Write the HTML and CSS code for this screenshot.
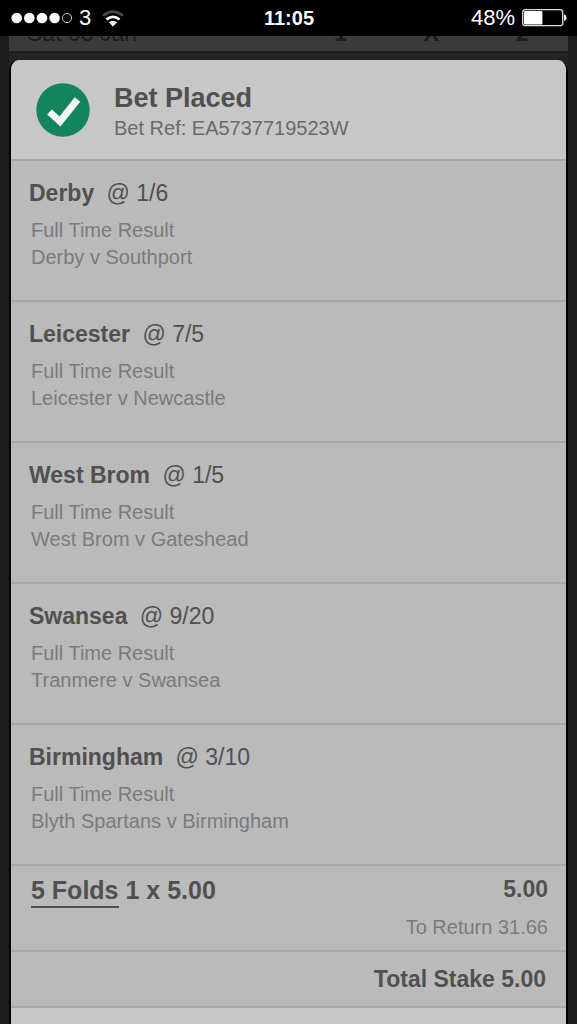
FILE: index.html
```html
<!DOCTYPE html>
<html lang="en">
<head>
    <meta charset="UTF-8">
    <meta name="viewport" content="width=device-width, initial-scale=1.0">
    <title>Bet Placed</title>
    <link rel="stylesheet" href="styles.css">
</head>
<body>

<header class="status-bar">
    <div class="signal">
        <svg width="61" height="12" viewBox="0 0 61 12" aria-hidden="true">
            <g fill="#fff">
                <circle cx="5.7" cy="6" r="5.3"/>
                <circle cx="18.3" cy="6" r="5.3"/>
                <circle cx="31" cy="6" r="5.3"/>
                <circle cx="43.6" cy="6" r="5.3"/>
            </g>
            <circle cx="56" cy="6" r="4.6" fill="none" stroke="#ccc" stroke-width="1"/>
        </svg>
        <span>3</span>
        <svg width="22" height="17" viewBox="0 0 22 17" aria-hidden="true">
            <g fill="none" stroke-width="2.6">
                <path d="M1 5.8Q11-2.6 21 5.8" stroke="#4a4a4a"/>
                <path d="M4.4 9.6Q11 4 17.6 9.6" stroke="#fff"/>
            </g>
            <path d="M6.8 12.3Q11 9 15.2 12.3L11 16.5Z" fill="#fff"/>
        </svg>
    </div>
    <div class="time">11:05</div>
    <div class="battery">
        <span>48%</span>
        <svg width="45" height="18" viewBox="0 0 45 18" aria-hidden="true">
            <rect x="0.7" y="0.7" width="40" height="16" rx="2.5" fill="none" stroke="#ddd" stroke-width="1.3"/>
            <rect x="2" y="2" width="18.4" height="13.4" rx="1" fill="#fff"/>
            <path d="M42 5.5Q44.6 6 44.6 8.8Q44.6 11.6 42 12Z" fill="#fff"/>
        </svg>
    </div>
</header>

<main class="page">
    <div class="coupon-head">
        <span class="coupon-date">Sat 03 Jan</span>
        <span class="coupon-col">1</span>
        <span class="coupon-col">X</span>
        <span class="coupon-col">2</span>
    </div>

    <section class="receipt">
        <div class="receipt-head">
            <svg class="tick" width="54" height="54" viewBox="0 0 54 54" aria-hidden="true">
                <circle cx="27" cy="27" r="26.7" fill="#14845c"/>
                <path d="M13.5 29L24 38.5L41.5 16.5" fill="none" stroke="#f5f8f7" stroke-width="7"/>
            </svg>
            <div class="receipt-title">
                <h1>Bet Placed</h1>
                <p>Bet Ref: EA5737719523W</p>
            </div>
        </div>

        <ul class="bets">
            <li>
                <h2>Derby <span>@ 1/6</span></h2>
                <p>Full Time Result</p>
                <p>Derby v Southport</p>
            </li>
            <li>
                <h2>Leicester <span>@ 7/5</span></h2>
                <p>Full Time Result</p>
                <p>Leicester v Newcastle</p>
            </li>
            <li>
                <h2>West Brom <span>@ 1/5</span></h2>
                <p>Full Time Result</p>
                <p>West Brom v Gateshead</p>
            </li>
            <li>
                <h2>Swansea <span>@ 9/20</span></h2>
                <p>Full Time Result</p>
                <p>Tranmere v Swansea</p>
            </li>
            <li>
                <h2>Birmingham <span>@ 3/10</span></h2>
                <p>Full Time Result</p>
                <p>Blyth Spartans v Birmingham</p>
            </li>
        </ul>

        <div class="stake">
            <div class="stake-type"><a href="#folds">5 Folds</a> 1 x 5.00</div>
            <div class="stake-sum">
                <strong>5.00</strong>
                <p>To Return 31.66</p>
            </div>
        </div>

        <div class="total">Total Stake 5.00</div>
        <div class="receipt-foot"></div>
    </section>
</main>

</body>
</html>
```
FILE: styles.css
```css
* {
    box-sizing: border-box;
}

body {
    font-family: "Liberation Sans", Arial, sans-serif;
    background-color: #1d1d1d;
    color: #505050;
    margin: 0;
    min-height: 100vh;
    display: flex;
    flex-direction: column;
}

h1, h2, p, ul {
    margin: 0;
    padding: 0;
}

/* Status bar */
.status-bar {
    display: grid;
    grid-template-columns: 1fr auto 1fr;
    align-items: center;
    height: 36px;
    padding: 0 10px 0 11px;
    background-color: #000;
    color: #fff;
    font-size: 22px;
}

.signal,
.battery {
    display: flex;
    align-items: center;
    gap: 7px;
}

.signal svg:last-child {
    margin-left: 4px;
}

.battery {
    justify-content: flex-end;
}

.time {
    font-size: 20px;
    font-weight: bold;
}

/* Page behind the receipt */
.page {
    flex: 1;
    display: flex;
    flex-direction: column;
    margin: 0 9px;
    background-color: #232323;
}

.coupon-head {
    display: flex;
    align-items: flex-end;
    height: 17px;
    padding: 0 0 6px 18px;
    overflow: hidden;
    background-color: #3b3b3b;
    border-bottom: 2px solid #1c1c1c;
    color: #1c1c1c;
    font-size: 23px;
    line-height: 24px;
}

.coupon-date {
    flex: 1;
}

.coupon-col {
    width: 91px;
    text-align: center;
    font-weight: bold;
}

/* Receipt */
.receipt {
    flex: 1;
    display: flex;
    flex-direction: column;
    margin-top: 7px;
    border: solid #000;
    border-width: 0 2px;
    border-radius: 10px 10px 0 0;
    background-color: #bababa;
    overflow: hidden;
}

.receipt-head {
    display: flex;
    align-items: center;
    gap: 24px;
    height: 99px;
    padding: 0 25px;
    background-color: #c7c7c7;
}

.receipt-title {
    padding-top: 4px;
}

.receipt-head h1 {
    font-size: 27px;
    line-height: 32px;
}

.receipt-head p {
    color: #6a6a6a;
    font-size: 20px;
    line-height: 28px;
}

.bets {
    list-style: none;
}

.bets li {
    height: 141px;
    padding: 16px 20px;
    border-top: 2px solid #a7a7a7;
}

.bets h2 {
    margin: 0 0 8px -2px;
    font-size: 23px;
    line-height: 32px;
}

.bets h2 span {
    margin-left: 6px;
    font-weight: normal;
}

.bets p,
.stake p {
    color: #7a7a7a;
    font-size: 20px;
    line-height: 27px;
}

.stake {
    display: flex;
    justify-content: space-between;
    height: 86px;
    padding: 8px 18px 8px 20px;
    border-top: 2px solid #a7a7a7;
}

.stake-type {
    font-size: 25px;
    font-weight: bold;
    line-height: 32px;
}

.stake-type a {
    padding-bottom: 2px;
    border-bottom: 2px solid #505050;
    color: inherit;
    text-decoration: none;
}

.stake-sum {
    text-align: right;
}

.stake-sum strong {
    display: block;
    margin-bottom: 10px;
    font-size: 23px;
    line-height: 30px;
}

.total {
    padding: 12px 20px;
    border: solid #a7a7a7;
    border-width: 2px 0;
    font-size: 23px;
    font-weight: bold;
    line-height: 30px;
    text-align: right;
}

.receipt-foot {
    flex: 1;
    background-color: #c7c7c7;
}
```
